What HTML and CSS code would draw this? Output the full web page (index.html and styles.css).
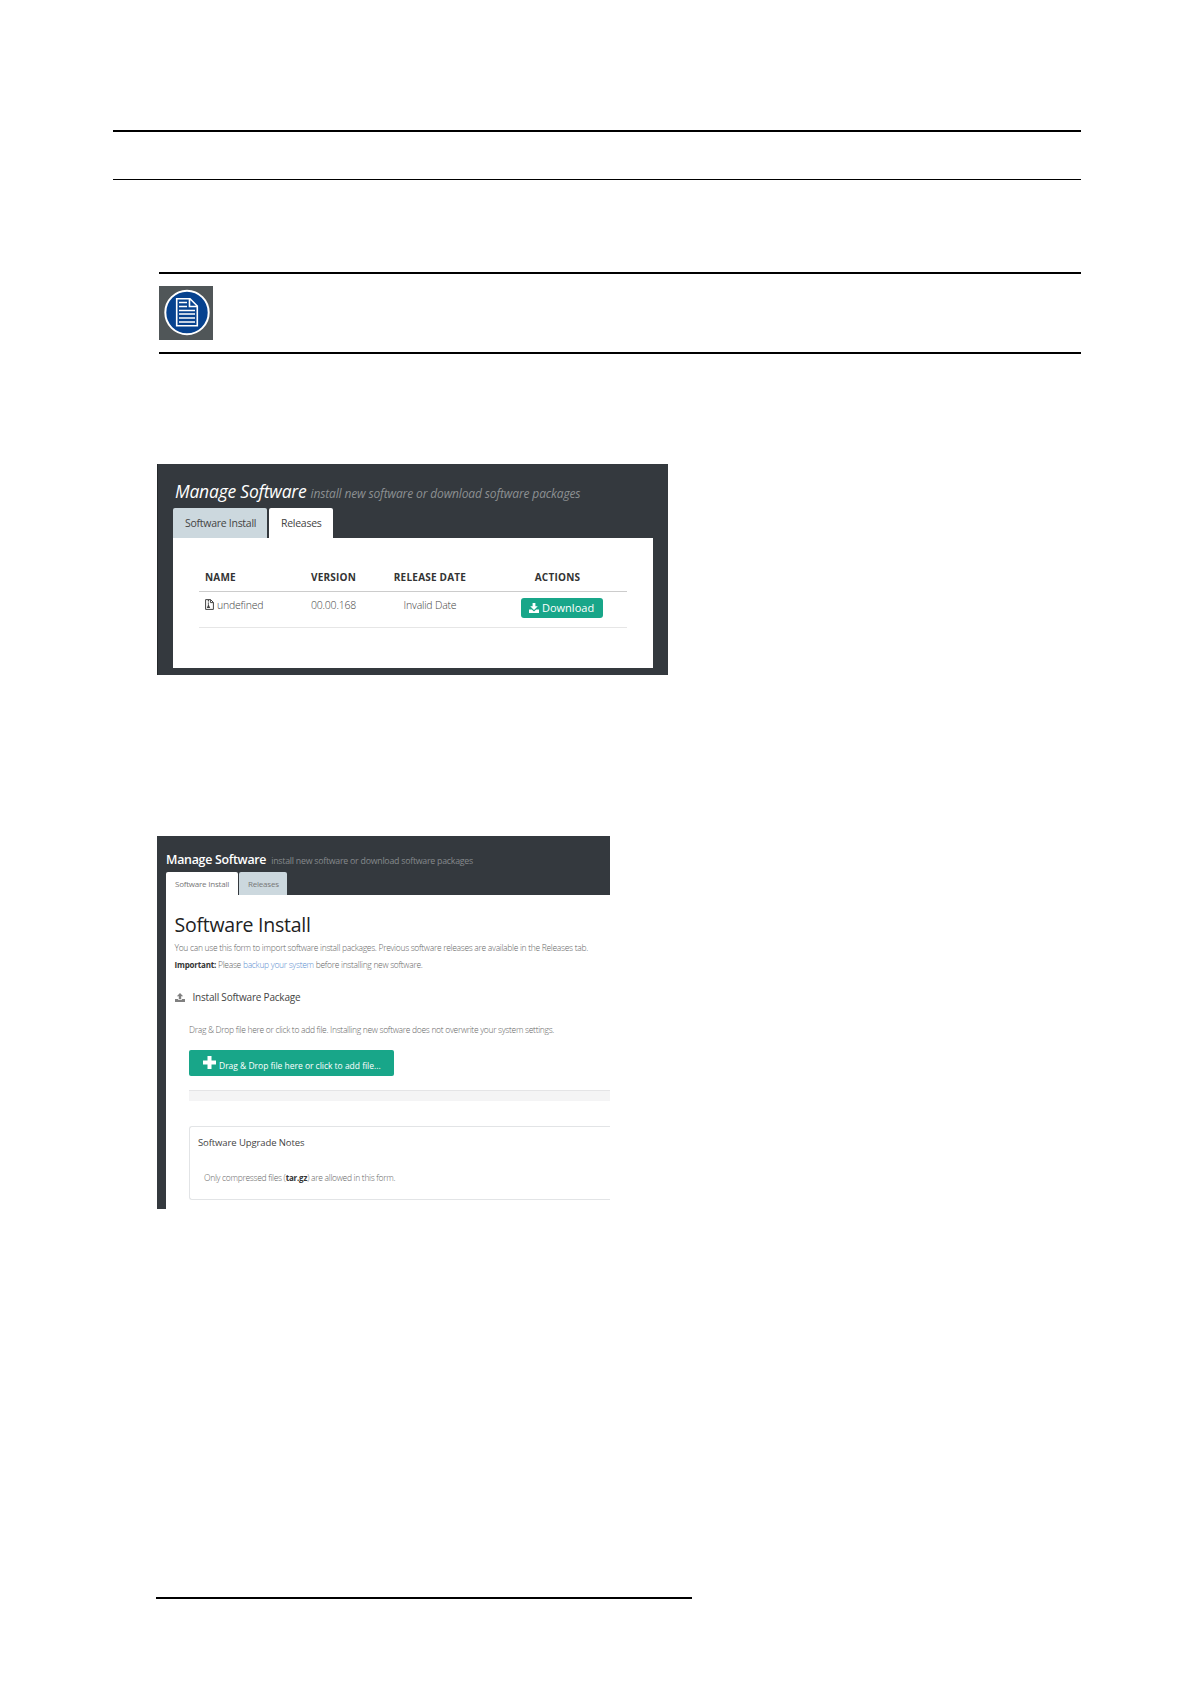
FILE: index.html
```html
<!DOCTYPE html>
<html lang="en">
<head>
    <meta charset="UTF-8">
    <meta name="viewport" content="width=device-width, initial-scale=1.0">
    <title>Manage Software</title>
    <link rel="stylesheet" href="styles.css">
</head>
<body>

<div class="page">
    <div class="page-header"></div>

    <div class="note">
        <svg class="note-icon" viewBox="0 0 54 54">
            <rect width="54" height="54" fill="#505658"/>
            <circle cx="28" cy="26.5" r="21.7" fill="#06428f" stroke="#fff" stroke-width="2"/>
            <path d="M17.7 12.7H31L38.3 20V39.8H17.7ZM30.5 12.7V20.5H38.3" fill="none" stroke="#fff" stroke-width="1.6"/>
            <path d="M20 16.5H28M20 20.5H28M20 24.5H36M20 28H36M20 32H36M20 36H36" stroke="#fff" stroke-width="1.3"/>
        </svg>
    </div>

    <div class="releases-shot">
        <div class="title"><span class="title-main">Manage Software</span><span class="title-sub">install new software or download software packages</span></div>
        <div class="tabs">
            <div class="tab tab-install"><span>Software Install</span></div>
            <div class="tab tab-releases active"><span>Releases</span></div>
        </div>
        <div class="panel">
            <table>
                <thead>
                    <tr>
                        <th class="col-name">NAME</th>
                        <th class="col-version">VERSION</th>
                        <th class="col-date">RELEASE DATE</th>
                        <th class="col-actions">ACTIONS</th>
                    </tr>
                </thead>
                <tbody>
                    <tr>
                        <td class="col-name">
                            <svg class="file-icon" viewBox="0 0 9 11"><path d="M.6.6H5.6L8.4 3.4V10.4H.6ZM5.4.6V3.6H8.4" fill="none" stroke="#444" stroke-width="1"/><path d="M3.4 1V6" stroke="#444" stroke-width="1.2" stroke-dasharray="1 .6"/><path d="M3.4 5L5.2 9H1.8Z" fill="#444"/></svg><span>undefined</span>
                        </td>
                        <td class="version">00.00.168</td>
                        <td class="date">Invalid Date</td>
                        <td class="col-actions">
                            <div class="download">
                                <svg viewBox="0 0 10 10"><path d="M3.6 0H6.4V3.2H8.8L5 7L1.2 3.2H3.6ZM0 6.4H2.8L5 8.4L7.2 6.4H10V10H0Z" fill="#fff"/></svg>
                                <span>Download</span>
                            </div>
                        </td>
                    </tr>
                </tbody>
            </table>
        </div>
    </div>

    <div class="install-shot">
        <div class="title"><span class="title-main">Manage Software</span><span class="title-sub">install new software or download software packages</span></div>
        <div class="tabs">
            <div class="tab tab-install active"><span>Software Install</span></div>
            <div class="tab tab-releases"><span>Releases</span></div>
        </div>
        <div class="content">
            <h1>Software Install</h1>
            <p class="intro">You can use this form to import software install packages. Previous software releases are available in the Releases tab.</p>
            <p class="important"><b>Important:</b> Please <a>backup your system</a> before installing new software.</p>
            <div class="section-title">
                <svg viewBox="0 0 10 9"><path d="M5 0L8.2 3.2H6.2V6H3.8V3.2H1.8ZM0 6H3V6.8H7V6H10V9H0Z" fill="#808080"/></svg>
                <h2>Install Software Package</h2>
            </div>
            <div class="upload">
                <p class="upload-text">Drag &amp; Drop file here or click to add file. Installing new software does not overwrite your system settings.</p>
                <div class="add-file">
                    <svg viewBox="0 0 13 13"><path d="M4.5 0H8.5V4.5H13V8.5H8.5V13H4.5V8.5H0V4.5H4.5Z" fill="#fff"/></svg>
                    <span>Drag &amp; Drop file here or click to add file...</span>
                </div>
                <div class="progress"></div>
                <div class="notes">
                    <h3>Software Upgrade Notes</h3>
                    <p>Only compressed files (<b>tar.gz</b>) are allowed in this form.</p>
                </div>
            </div>
        </div>
    </div>

    <div class="page-footer"></div>
</div>

</body>
</html>
```
FILE: styles.css
```css
* {
    box-sizing: border-box;
}
body {
    margin: 0;
    background: #fff;
    font-family: "Open Sans", sans-serif;
    color: #444;
}
h1, h2, h3, p {
    margin: 0;
    font-weight: 400;
}
svg {
    display: block;
    flex: none;
}
.page {
    width: 1190px;
    height: 1684px;
    padding: 130px 109px 0 113px;
    overflow: hidden;
}
.page-header {
    height: 50px;
    border-top: 2px solid #000;
    border-bottom: 1px solid #000;
}
.note {
    height: 82px;
    margin: 92px 0 0 46px;
    padding-top: 12px;
    border-top: 2px solid #000;
    border-bottom: 2px solid #000;
}
.note-icon {
    width: 54px;
    height: 54px;
}
.title, .tab, .content p, h1, h2, h3, td, th {
    white-space: nowrap;
}
.tabs {
    display: flex;
}
.tab {
    background: #ccd8de;
    border-radius: 2px 2px 0 0;
}
.tab.active {
    background: #fff;
}

/* releases tab */
.releases-shot {
    width: 511px;
    height: 211px;
    margin: 110px 0 0 44px;
    padding: 12px 15px 0 15px;
    background: #34393e;
    border-left: 1px solid #24282b;
}
.releases-shot .title {
    height: 32px;
    line-height: 30px;
    padding-left: 2px;
    font-style: italic;
}
.releases-shot .title-main {
    font-size: 17.5px;
    letter-spacing: -0.22px;
    color: #fff;
}
.releases-shot .title-sub {
    margin-left: 4px;
    font-size: 12px;
    letter-spacing: -0.14px;
    color: #8c9092;
}
.releases-shot .tabs {
    gap: 2px;
    height: 30px;
}
.releases-shot .tab {
    padding-left: 12px;
    font-size: 10.5px;
    line-height: 31px;
    letter-spacing: -0.27px;
}
.releases-shot .tab-install {
    width: 94px;
}
.releases-shot .tab-releases {
    width: 64px;
}
.panel {
    width: 480px;
    height: 130px;
    padding: 25px 0 0 26px;
    background: #fff;
}
table {
    width: 428px;
    table-layout: fixed;
    border-collapse: collapse;
}
th, td {
    padding: 0;
    text-align: center;
}
th {
    height: 28px;
    padding-top: 1px;
    font-size: 10px;
    line-height: 27px;
    letter-spacing: 0.22px;
    font-weight: 700;
    color: #333;
    border-bottom: 1px solid #ccc;
}
td {
    height: 36px;
    vertical-align: top;
    font-size: 10.5px;
    line-height: 27px;
    letter-spacing: -0.2px;
    border-bottom: 1px solid #e6e6e6;
    font-weight: 300;
}
th.col-name, td.col-name {
    width: 86px;
    padding-left: 6px;
    text-align: left;
}
.col-version {
    width: 97px;
}
.col-date {
    width: 96px;
}
th.col-actions {
    padding-left: 10px;
}
.file-icon {
    display: inline-block;
    width: 9px;
    height: 11px;
    margin-right: 3px;
    vertical-align: -1px;
}
.download {
    display: flex;
    align-items: center;
    gap: 3px;
    width: 82px;
    height: 20px;
    margin: 6px 0 0 43px;
    padding-left: 8px;
    border-radius: 3px;
    background: #18a689;
    color: #fff;
    font-size: 11px;
    line-height: 20px;
    letter-spacing: 0;
    font-weight: 400;
}
.download svg {
    width: 10px;
    height: 10px;
}

/* software install tab */
.install-shot {
    width: 453px;
    height: 373px;
    margin: 161px 0 0 44px;
    padding: 12px 0 0 9px;
    background: #34393e;
    overflow: hidden;
}
.install-shot .title {
    height: 24px;
    line-height: 20px;
}
.install-shot .title-main {
    font-size: 12.4px;
    font-weight: 600;
    letter-spacing: -0.28px;
    color: #fff;
}
.install-shot .title-sub {
    margin-left: 5px;
    font-size: 8.8px;
    letter-spacing: -0.25px;
    color: #85898c;
}
.install-shot .tabs {
    gap: 1px;
    height: 23px;
}
.install-shot .tab {
    padding-left: 9px;
    font-size: 8px;
    line-height: 23px;
    letter-spacing: -0.22px;
    color: #777;
}
.install-shot .tab-install {
    width: 72px;
}
.install-shot .tab-releases {
    width: 48px;
}
.content {
    height: 314px;
    padding: 15px 0 0 8.5px;
    background: #fff;
    font-size: 8.5px;
    color: #666;
}
.content p {
    font-weight: 300;
    letter-spacing: -0.3px;
}
.content b {
    font-size: 8px;
    font-weight: 700;
    letter-spacing: -0.18px;
    color: #333;
}
.content a {
    color: #6090d0;
}
h1 {
    font-size: 19.5px;
    line-height: 30px;
    letter-spacing: -0.25px;
    color: #222;
}
.intro, .important {
    line-height: 16.5px;
}
.section-title {
    display: flex;
    align-items: center;
    gap: 8px;
    height: 20px;
    margin-top: 14px;
}
.section-title svg {
    width: 10px;
    height: 9px;
}
h2 {
    font-size: 10px;
    letter-spacing: -0.2px;
    color: #444;
}
.upload {
    padding: 15px 0 0 14.5px;
}
.upload-text {
    line-height: 16px;
}
.add-file {
    display: flex;
    gap: 3px;
    width: 205px;
    height: 26px;
    margin-top: 12px;
    padding: 6px 0 0 14px;
    border-radius: 2px;
    background: #18a689;
    color: #fff;
    font-size: 8.5px;
    line-height: 20px;
    letter-spacing: -0.02px;
}
.add-file svg {
    width: 13px;
    height: 13px;
}
.progress {
    height: 11px;
    margin-top: 14px;
    background: #f4f4f5;
    border-top: 1px solid #e4e4e6;
}
.notes {
    height: 74px;
    margin-top: 25px;
    padding: 6px 0 0 8px;
    border: 1px solid #e2e4e6;
    border-right: none;
    border-radius: 3px 0 0 3px;
}
h3 {
    font-size: 9.5px;
    line-height: 20px;
    letter-spacing: -0.1px;
    color: #444;
}
.notes p {
    padding: 17px 0 0 6px;
    line-height: 16px;
}

.page-footer {
    width: 536px;
    margin: 388px 0 0 43px;
    border-top: 2px solid #000;
}
```
